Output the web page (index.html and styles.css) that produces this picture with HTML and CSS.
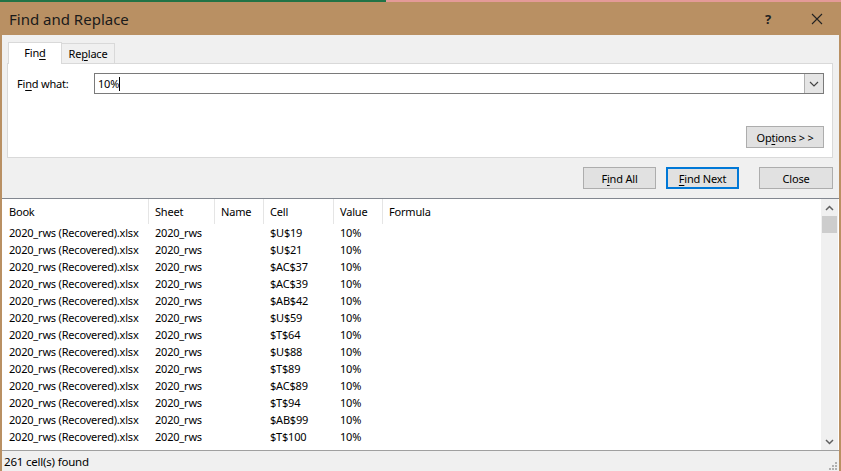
FILE: index.html
```html
<!DOCTYPE html>
<html>
<head>
<meta charset="utf-8">
<link rel="stylesheet" href="styles.css">
</head>
<body>
<div class="topline"><div class="tl-green"></div><div class="tl-pink"></div></div>
<div class="window">
  <div class="titlebar">
    <div class="title">Find and Replace</div>
    <div class="tb-btn help">?</div>
    <div class="tb-btn close">
      <svg width="12" height="12" viewBox="0 0 12 12"><path d="M1 1L11 11M11 1L1 11" stroke="#222" stroke-width="1.1" fill="none"/></svg>
    </div>
  </div>
  <div class="body">
    <div class="tabs">
      <div class="tab active">Fin<u>d</u></div>
      <div class="tab">Re<u>p</u>lace</div>
    </div>
    <div class="panel">
      <div class="findrow">
        <div class="label">Fi<u>n</u>d what:</div>
        <div class="combo">
          <div class="combo-text">10%<span class="caret"></span></div>
          <div class="combo-btn">
            <svg width="10" height="6" viewBox="0 0 10 6"><path d="M1 1L5 5L9 1" stroke="#444" stroke-width="1.2" fill="none"/></svg>
          </div>
        </div>
      </div>
      <div class="optrow"><div class="btn opt">Op<u>t</u>ions &gt; &gt;</div></div>
    </div>
    <div class="btnrow">
      <div class="btn">F<u>i</u>nd All</div>
      <div class="btn default"><u>F</u>ind Next</div>
      <div class="btn closebtn">Close</div>
    </div>
  </div>
  <div class="list">
    <div class="grid">
      <div class="head">
        <div class="c c1">Book</div><div class="c c2">Sheet</div><div class="c c3">Name</div><div class="c c4">Cell</div><div class="c c5">Value</div><div class="c c6">Formula</div>
      </div>
      <div class="row"><div class="c c1">2020_rws (Recovered).xlsx</div><div class="c c2">2020_rws</div><div class="c c3"></div><div class="c c4">$U$19</div><div class="c c5">10%</div></div>
      <div class="row"><div class="c c1">2020_rws (Recovered).xlsx</div><div class="c c2">2020_rws</div><div class="c c3"></div><div class="c c4">$U$21</div><div class="c c5">10%</div></div>
      <div class="row"><div class="c c1">2020_rws (Recovered).xlsx</div><div class="c c2">2020_rws</div><div class="c c3"></div><div class="c c4">$AC$37</div><div class="c c5">10%</div></div>
      <div class="row"><div class="c c1">2020_rws (Recovered).xlsx</div><div class="c c2">2020_rws</div><div class="c c3"></div><div class="c c4">$AC$39</div><div class="c c5">10%</div></div>
      <div class="row"><div class="c c1">2020_rws (Recovered).xlsx</div><div class="c c2">2020_rws</div><div class="c c3"></div><div class="c c4">$AB$42</div><div class="c c5">10%</div></div>
      <div class="row"><div class="c c1">2020_rws (Recovered).xlsx</div><div class="c c2">2020_rws</div><div class="c c3"></div><div class="c c4">$U$59</div><div class="c c5">10%</div></div>
      <div class="row"><div class="c c1">2020_rws (Recovered).xlsx</div><div class="c c2">2020_rws</div><div class="c c3"></div><div class="c c4">$T$64</div><div class="c c5">10%</div></div>
      <div class="row"><div class="c c1">2020_rws (Recovered).xlsx</div><div class="c c2">2020_rws</div><div class="c c3"></div><div class="c c4">$U$88</div><div class="c c5">10%</div></div>
      <div class="row"><div class="c c1">2020_rws (Recovered).xlsx</div><div class="c c2">2020_rws</div><div class="c c3"></div><div class="c c4">$T$89</div><div class="c c5">10%</div></div>
      <div class="row"><div class="c c1">2020_rws (Recovered).xlsx</div><div class="c c2">2020_rws</div><div class="c c3"></div><div class="c c4">$AC$89</div><div class="c c5">10%</div></div>
      <div class="row"><div class="c c1">2020_rws (Recovered).xlsx</div><div class="c c2">2020_rws</div><div class="c c3"></div><div class="c c4">$T$94</div><div class="c c5">10%</div></div>
      <div class="row"><div class="c c1">2020_rws (Recovered).xlsx</div><div class="c c2">2020_rws</div><div class="c c3"></div><div class="c c4">$AB$99</div><div class="c c5">10%</div></div>
      <div class="row"><div class="c c1">2020_rws (Recovered).xlsx</div><div class="c c2">2020_rws</div><div class="c c3"></div><div class="c c4">$T$100</div><div class="c c5">10%</div></div>
    </div>
    <div class="scrollbar">
      <div class="sb-arrow">
        <svg width="9" height="6" viewBox="0 0 9 6"><path d="M1 5L4.5 1.5L8 5" stroke="#606060" stroke-width="1.5" fill="none"/></svg>
      </div>
      <div class="sb-thumb"></div>
      <div class="sb-track"></div>
      <div class="sb-arrow">
        <svg width="9" height="6" viewBox="0 0 9 6"><path d="M1 1L4.5 4.5L8 1" stroke="#606060" stroke-width="1.5" fill="none"/></svg>
      </div>
    </div>
  </div>
  <div class="status">
    <div class="status-text">261 cell(s) found</div>
    <svg class="grip" width="10" height="10" viewBox="0 0 10 10" fill="#b0b0b0">
      <rect x="8" y="2" width="2" height="2"/><rect x="5" y="5" width="2" height="2"/><rect x="8" y="5" width="2" height="2"/>
      <rect x="2" y="8" width="2" height="2"/><rect x="5" y="8" width="2" height="2"/><rect x="8" y="8" width="2" height="2"/>
    </svg>
  </div>
</div>
</body>
</html>
```

FILE: styles.css
```css
* { box-sizing: border-box; }
html, body { margin: 0; padding: 0; }
body {
  width: 841px;
  height: 471px;
  overflow: hidden;
  font-family: "Segoe UI", "Noto Sans", "Open Sans", sans-serif;
  font-size: 11px;
  letter-spacing: -0.2px;
  color: #000;
  background: #f0f0f0;
}
u { text-decoration: underline; text-underline-offset: 2px; }
.topline { display: flex; height: 2px; }
.tl-green { width: 386px; background: #217346; }
.tl-pink { flex: 1; background: #e49a98; }
.window {
  height: 469px;
  display: flex;
  flex-direction: column;
  border-left: 2px solid #b99063;
  border-right: 2px solid #b99063;
  background: #f0f0f0;
}
.titlebar {
  height: 33px;
  flex: none;
  background: #b99063;
  display: flex;
  align-items: center;
  margin: 0 -2px;
  padding-left: 9px;
}
.title { font-size: 15px; letter-spacing: 0; color: #1a1a1a; flex: 1; }
.tb-btn { width: 46px; display: flex; justify-content: center; align-items: center; color: #222; }
.help { font-size: 13px; font-weight: bold; margin-right: 3px; }
.close { margin-right: 1px; }
.body { padding: 7px 6px 0 5px; flex: none; }
.tabs { display: flex; align-items: flex-end; height: 21px; padding-left: 1px; }
.tab {
  width: 54px;
  height: 20px;
  display: flex;
  justify-content: center;
  align-items: center;
  border: 1px solid #d9d9d9;
  border-bottom: none;
  background: #f0f0f0;
  margin-left: -1px;
}
.tab.active {
  height: 22px;
  background: #fff;
  margin-bottom: -1px;
  position: relative;
  z-index: 1;
  margin-left: 0;
  padding-bottom: 2px;
}
.panel {
  height: 95px;
  background: #fff;
  border: 1px solid #d9d9d9;
  padding: 9px 8px 0 9px;
  display: flex;
  flex-direction: column;
}
.findrow { display: flex; align-items: center; height: 21px; }
.label { width: 77px; }
.combo { flex: 1; display: flex; height: 21px; border: 1px solid #7a7a7a; }
.combo-text { flex: 1; padding-left: 3px; display: flex; align-items: center; }
.caret { display: inline-block; width: 1px; height: 14px; background: #000; margin-left: 0; }
.combo-btn {
  width: 19px;
  background: #e5e5e5;
  border-left: 1px solid #b0b0b0;
  display: flex;
  align-items: center;
  justify-content: center;
}
.optrow { display: flex; justify-content: flex-end; margin-top: 32px; }
.btn {
  height: 22px;
  width: 73px;
  background: #e1e1e1;
  border: 1px solid #adadad;
  display: flex;
  align-items: center;
  justify-content: center;
}
.btn.opt { width: 78px; }
.btnrow { display: flex; justify-content: flex-end; gap: 10px; margin-top: 9px; height: 22px; }
.btn.default { border: 2px solid #0078d7; }
.btn.closebtn { width: 74px; margin-left: 10px; }
.list {
  margin-top: 9px;
  flex: 1;
  display: flex;
  background: #fff;
  border-top: 1px solid #828790;
  min-height: 0;
}
.grid { flex: 1; overflow: hidden; }
.head { display: flex; height: 25px; align-items: center; }
.head .c { border-right: 1px solid #e5e5e5; height: 25px; display: flex; align-items: center; }
.head .c6 { border-right: none; }
.row { display: flex; height: 17px; align-items: center; }
.c { padding-left: 6px; white-space: nowrap; overflow: hidden; }
.c1 { width: 147px; padding-left: 7px; }
.c2 { width: 66px; }
.c3 { width: 49px; }
.c4 { width: 70px; }
.c5 { width: 49px; }
.c6 { width: 100px; }
.scrollbar {
  width: 17px;
  flex: none;
  background: #f0f0f0;
  display: flex;
  flex-direction: column;
  margin-right: 1px;
}
.sb-arrow { height: 17px; display: flex; align-items: center; justify-content: center; }
.sb-thumb { height: 17px; margin: 0 1px; background: #cdcdcd; }
.sb-track { flex: 1; }
.status {
  height: 21px;
  flex: none;
  border-top: 1px solid #a0a0a0;
  display: flex;
  align-items: center;
  padding-left: 2px;
  font-size: 11.5px;
}
.status-text { flex: 1; }
.grip { margin-right: 2px; align-self: flex-end; margin-bottom: 1px; }
```
